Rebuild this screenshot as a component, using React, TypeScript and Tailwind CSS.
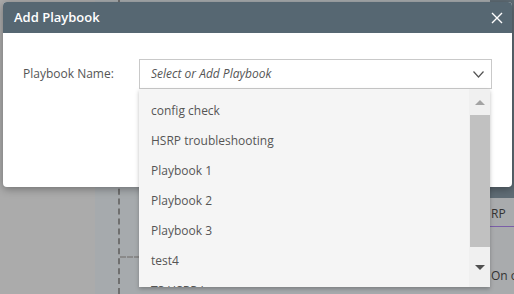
import React from 'react';

const items = ['config check', 'HSRP troubleshooting', 'Playbook 1', 'Playbook 2', 'Playbook 3', 'test4', 'TS HSRP L'];

const Backdrop: React.FC = () => (
  <div className="flex h-full w-full">
    <div className="w-[95px] bg-[#ababab]" />
    <div className="relative flex-1 bg-[#a6aaad]">
      {/* dashed guides from the page behind */}
      <div className="absolute left-[23px] top-0 h-full border-l-2 border-dashed border-[#6f6f6f]" />
      <div className="absolute left-[25px] top-[256px] w-[20px] border-t-2 border-dashed border-[#8a8a8a]" />
    </div>
    <div className="flex w-[24px] flex-col overflow-hidden whitespace-nowrap bg-[#a9abad] text-[12px] text-[#333]">
      <div className="h-[198px] bg-[#5f6c75]" />
      <div className="h-[29px] border-b border-[#7b5ea8] pl-[1px] pt-[7px]">RP</div>
      <div className="pl-[1px] pt-[40px]">On o</div>
    </div>
  </div>
);

export default function App() {
  return (
    <div
      className="relative h-[294px] w-[514px] overflow-hidden bg-[#9c9c9c]"
      style={{ fontFamily: '"Open Sans", "Noto Sans", sans-serif' }}
    >
      <Backdrop />

      <div className="absolute left-[3px] top-[2px] h-[185px] w-[509px] overflow-hidden rounded-[4px] bg-white shadow-[0_2px_8px_rgba(0,0,0,0.35)]">
        <div className="flex h-[31px] items-center justify-between bg-[#566772] pl-[11px] pr-[9px] text-white">
          <span className="text-[13px] font-semibold">Add Playbook</span>
          <svg width="12" height="12" viewBox="0 0 12 12" fill="none" stroke="white" strokeWidth="1.4">
            <path d="M1 1l10 10M11 1L1 11" />
          </svg>
        </div>
        <div className="flex items-center pl-[20px] pt-[26px]">
          <span className="w-[116px] text-[12px] text-[#555]">Playbook Name:</span>
          <div className="flex h-[30px] w-[353px] items-center justify-between border border-[#c9c9c9] pl-[11px] pr-[7px]">
            <span className="text-[12px] italic text-[#555]">Select or Add Playbook</span>
            <svg width="11" height="7" viewBox="0 0 11 7" fill="none" stroke="#555" strokeWidth="1.2">
              <path d="M0.5 0.5l5 5.5 5-5.5" />
            </svg>
          </div>
        </div>
      </div>

      <div className="absolute left-[139px] top-[89px] flex h-[198px] w-[351px] bg-[#f5f5f5] shadow-[0_2px_4px_rgba(0,0,0,0.25)]">
        <div className="flex-1 overflow-hidden pt-[2px]">
          {items.map((item) => (
            <div key={item} className="flex h-[30px] items-center pl-[12px] pt-[10px] text-[12px] text-[#555]">
              {item}
            </div>
          ))}
        </div>
        <div className="flex w-[21px] flex-col items-center bg-[#f0f0f0]">
          <div className="flex h-[26px] items-center">
            <div className="h-0 w-0 border-x-[5px] border-b-[5px] border-x-transparent border-b-[#a3a3a3]" />
          </div>
          <div className="h-[132px] w-[20px] bg-[#c1c1c1]" />
          <div className="flex flex-1 items-center">
            <div className="h-0 w-0 border-x-[5px] border-t-[5px] border-x-transparent border-t-[#505050]" />
          </div>
        </div>
      </div>
    </div>
  );
}
